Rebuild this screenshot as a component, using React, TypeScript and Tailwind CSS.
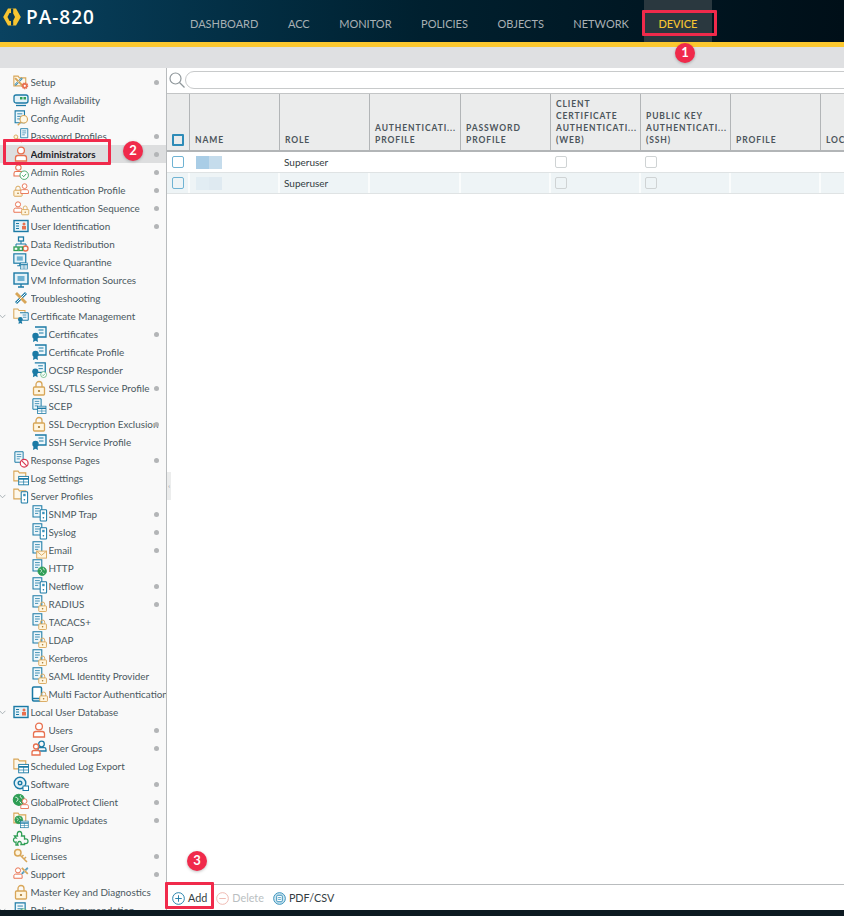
const BLUE = "#1b7aa5";
const ORANGE = "#e8704f";
const GOLD = "#d8a658";
const GREEN = "#2f9e55";

type Part = "person" | "lock" | "doc" | "folder" | "card" | "cert" | "check" | "no" | "device" | "mail" | "globe" | "wrench" | "key" | "disc" | "screen" | "puzzle" | "phone" | "tree" | "table" | "group" | "gear" | "glass" | "ha";

// small pieces the tree icons are put together from
function Piece({ part, x = 0, y = 0, s = 1, c }: { part: Part; x?: number; y?: number; s?: number; c?: string }) {
  const t = `translate(${x} ${y}) scale(${s})`;
  const p = { transform: t, fill: "none", strokeWidth: 1.3 };
  switch (part) {
    case "person":
      return (
        <g {...p} stroke={c ?? ORANGE}>
          <circle cx="8" cy="4.5" r="3.4" fill="#fff" />
          <path d="M2.5 15v-3.2c0-1.3 1-2.3 2.3-2.3h6.4c1.3 0 2.3 1 2.3 2.3V15z" fill="#fff" />
        </g>
      );
    case "lock":
      return (
        <g {...p} stroke={c ?? GOLD}>
          <path d="M5 7V4.5a3 3 0 0 1 6 0V7" />
          <rect x="2.5" y="7" width="11" height="8" rx="1" fill="#fff5df" />
          <circle cx="8" cy="11" r="1.1" fill={c ?? "#a8782e"} stroke="none" />
        </g>
      );
    case "doc":
      return (
        <g {...p} stroke={c ?? BLUE}>
          <path d="M2.5 1h11v14h-11z" fill="#eef7fb" />
          <path d="M5 4.5h6M5 7.5h6M5 10.5h4" strokeWidth="1" />
        </g>
      );
    case "folder":
      return (
        <g {...p} stroke={c ?? GOLD}>
          <path d="M1 14V2.5h5l1.5 2H15V14z" fill="#fdf8ec" />
        </g>
      );
    case "card":
      return (
        <g {...p} stroke={BLUE}>
          <rect x="1" y="2.5" width="14" height="11" fill="#e4f2f8" strokeWidth="1.4" />
          <path d="M3 5.5h3M3 8h3M3 10.5h3" strokeWidth="1" />
          <circle cx="11" cy="6" r="1.5" fill={ORANGE} stroke="none" />
          <rect x="9" y="8" width="4" height="3.5" fill={ORANGE} stroke="none" />
        </g>
      );
    case "cert":
      return (
        <g {...p}>
          <path d="M4 1h11v10H7" stroke={BLUE} fill="#eef7fb" />
          <path d="M7.5 4h5M8 7h4.5" stroke={BLUE} strokeWidth="1" />
          <circle cx="4.5" cy="10" r="3.2" fill={BLUE} stroke="none" />
          <path d="M2.5 12.5 2 16l2.5-1.2L7 16l-.5-3.5z" fill={BLUE} stroke="none" />
        </g>
      );
    case "check":
      return (
        <g {...p} stroke={c ?? GREEN}>
          <circle cx="8" cy="8" r="6.5" fill="#fff" />
          <path d="m5 8 2.2 2.3L11 6" strokeWidth="1.4" />
        </g>
      );
    case "no":
      return (
        <g {...p} stroke="#d9364f" strokeWidth="1.8">
          <circle cx="8" cy="8" r="6" fill="#fff" />
          <path d="m4 4 8 8" />
        </g>
      );
    case "device":
      return (
        <g {...p} stroke={BLUE}>
          <rect x="4" y="1" width="8" height="14" rx="1" fill="#fff" />
          <rect x="6.5" y="3.5" width="3" height="3" fill="#3a93bd" stroke="none" />
          <circle cx="8" cy="11" r="1" fill={BLUE} stroke="none" />
        </g>
      );
    case "mail":
      return (
        <g {...p} stroke={GOLD}>
          <rect x="1" y="3" width="14" height="10" fill="#fff5df" />
          <path d="m1 3 7 6 7-6" />
        </g>
      );
    case "globe":
      return (
        <g {...p} stroke={GREEN}>
          <circle cx="8" cy="8" r="6.5" fill="#2f9e55" />
          <path d="M4 5c2 0 3 1 3 2.5S5 10 5 10M10 3c-1 2 1 3 2 3M9 10l2 2.5" stroke="#fff" strokeWidth="1.1" />
        </g>
      );
    case "wrench":
      return (
        <g {...p}>
          <path d="m3 13 10-10" stroke={BLUE} strokeWidth="2.8" />
          <path d="m3 3 10 10" stroke={c ?? GOLD} strokeWidth="2.8" />
          <path d="m3.5 12.5 9-9" stroke="#fff" strokeWidth="1" />
        </g>
      );
    case "key":
      return (
        <g {...p} stroke={GOLD} strokeWidth="1.5">
          <circle cx="4.8" cy="4.8" r="3.2" fill="#fff5df" />
          <path d="m7 7 7 7m-3-3 2-2m-4-.5 1.5-1.5" />
        </g>
      );
    case "disc":
      return (
        <g {...p} stroke={BLUE} strokeWidth="1.4">
          <circle cx="7" cy="7" r="5.8" fill="#e4f2f8" />
          <circle cx="7" cy="7" r="1.8" />
          <rect x="10" y="10" width="5.5" height="4.5" fill="#fff" strokeWidth="1" />
        </g>
      );
    case "screen":
      return (
        <g {...p} stroke={BLUE}>
          <rect x="1" y="1" width="14" height="11" fill="#e4f2f8" strokeWidth="1.4" />
          <rect x="4.5" y="4" width="7" height="5" fill="#6fb2d2" stroke="none" />
          <path d="M8 12v3M5 15h6" />
        </g>
      );
    case "puzzle":
      return (
        <g {...p} stroke={GREEN}>
          <path d="M1.5 6h3c-.8-3 .3-4.5 2-4.5s2.8 1.5 2 4.500h3v3c3-.8 3.500 1 3.500 2.200s-.5 3-3.500 2.300v1H8c.8-2-.3-3-1.500-3S4 13 5 15H3v-3c-1.500.5-2.500-.5-2.500-2s1-2.500 2.500-2z" />
        </g>
      );
    case "phone":
      return (
        <g {...p} stroke={BLUE} strokeWidth="1.5">
          <rect x="1.5" y="1" width="9" height="14" rx="1.2" fill="#fff" />
          <path d="M1.5 12.500h9" />
        </g>
      );
    case "tree":
      return (
        <g {...p}>
          <rect x="5.500" y="1" width="5" height="4" stroke={BLUE} />
          <path d="M8 5v3M3 11V8h10v3" stroke={BLUE} strokeWidth="1" />
          <rect x="1" y="11" width="4" height="3.500" stroke={GREEN} />
          <circle cx="12.500" cy="12.500" r="2.500" stroke={ORANGE} strokeWidth="1.4" />
          <rect x="6" y="11" width="3.500" height="3.500" stroke={GREEN} />
        </g>
      );
    case "table":
      return (
        <g {...p} stroke={BLUE}>
          <rect x="1" y="2" width="14" height="12" fill="#fff" strokeWidth="1.300" />
          <path d="M1 5.500h14" strokeWidth="2.500" />
          <path d="M1 10h14M8 5.500V14" strokeWidth="1" />
        </g>
      );
    case "group":
      return (
        <g {...p}>
          <circle cx="10.500" cy="4" r="2.800" stroke={BLUE} />
          <path d="M7 11V9.500c0-1 .8-1.800 1.800-1.800h4.400c1 0 1.800.8 1.800 1.800V11z" stroke={BLUE} />
          <circle cx="5" cy="6.500" r="2.500" stroke={ORANGE} fill="#fff" />
          <path d="M1 15v-2.500c0-1 .8-2 2-2h4c1.200 0 2 1 2 2V15z" stroke={ORANGE} fill="#fff" />
        </g>
      );
    case "gear":
      return (
        <g {...p} stroke={ORANGE}>
          <circle cx="8" cy="8" r="4.500" fill={ORANGE} strokeDasharray="2 1" strokeWidth="2.500" />
          <circle cx="8" cy="8" r="1.800" fill="#fff" stroke="none" />
        </g>
      );
    case "glass":
      return (
        <g {...p} stroke={GOLD} strokeWidth="1.500">
          <circle cx="9" cy="7" r="5" fill="#fff8e6" />
          <path d="m5 11-4 4" strokeWidth="2" />
        </g>
      );
    default:
      return (
        <g {...p} stroke={BLUE} strokeWidth="1.300">
          <rect x="1" y="3" width="14" height="8" rx="2" fill="#e4f2f8" />
          <rect x="7" y="5" width="2.500" height="2.500" fill={GREEN} stroke="none" />
          <rect x="10.500" y="5" width="2.500" height="2.500" fill={GREEN} stroke="none" />
          <path d="M3 13.500h10" />
        </g>
      );
  }
}

type Layer = [Part, number, number, number, string?];

const icons: Record<string, Layer[]> = {
  setup: [["folder", 0, 0, 0.85], ["wrench", 0, 2, 0.7], ["gear", 7, 7, 0.6]],
  ha: [["ha", 0, 0, 1]],
  audit: [["doc", 0, 0, 0.85], ["glass", 4, 4, 0.75]],
  password: [["doc", 6, 0, 0.65], ["key", 0, 6, 0.6]],
  admin: [["person", 0, 0, 1]],
  roles: [["person", -1, 0, 0.8], ["check", 6, 6, 0.65]],
  authprofile: [["lock", -1, 3, 0.75], ["person", 6, 1, 0.7]],
  authseq: [["person", -1, 1, 0.75], ["lock", 7, 5, 0.65]],
  card: [["card", 0, 0, 1]],
  tree: [["tree", 0, 0, 1]],
  quarantine: [["screen", 0, -1, 0.85], ["table", 7, 8, 0.5]],
  vm: [["screen", 0, 0, 1]],
  trouble: [["wrench", 0, 0, 1]],
  certmgmt: [["folder", 0, -1, 0.8], ["cert", 4, 4, 0.75]],
  cert: [["cert", 0, 0, 1]],
  ocsp: [["cert", 0, 0, 0.95], ["check", 9, 9, 0.45, GREEN]],
  lock: [["lock", 0, 0, 1]],
  scep: [["doc", 0, 0, 0.75], ["table", 6, 7, 0.6]],
  response: [["doc", 0, -1, 0.75], ["no", 6, 6, 0.65]],
  logs: [["folder", 0, -1, 0.85], ["table", 5, 5, 0.7]],
  servers: [["folder", 0, -1, 0.85], ["device", 5, 3, 0.8]],
  snmp: [["doc", 0, -1, 0.8], ["device", 6, 3, 0.8]],
  email: [["doc", 0, -1, 0.8], ["mail", 5, 7, 0.7]],
  http: [["doc", 0, -1, 0.8], ["globe", 6, 6, 0.65]],
  serverlock: [["doc", 0, -1, 0.8], ["lock", 6, 5, 0.7]],
  mfa: [["phone", 0, 0, 1], ["lock", 7, 5, 0.7]],
  users: [["person", 0, 0, 1]],
  groups: [["group", 0, 0, 1]],
  software: [["disc", 0, 0, 1]],
  gp: [["globe", -1, -1, 0.85, GREEN], ["person", 6, 4, 0.7]],
  dynamic: [["folder", 0, -1, 0.85], ["globe", 1, 3, 0.6], ["table", 7, 8, 0.55]],
  plugin: [["puzzle", 0, 0, 1]],
  key: [["key", 0, 0, 1]],
  support: [["person", -1, 1, 0.75], ["wrench", 7, 0, 0.6]],
  policy: [["doc", 0, 0, 0.9], ["check", 6, 6, 0.55]],
};

function Icon({ name }: { name: string }) {
  return (
    <svg viewBox="0 0 16 16" className="w-4 h-4 shrink-0 overflow-visible">
      {icons[name].map(([part, x, y, s, c], i) => (
        <Piece key={i} part={part} x={x} y={y} s={s} c={c} />
      ))}
    </svg>
  );
}

type TreeItem = { label: string; icon: string; dot?: boolean; child?: boolean; open?: boolean; active?: boolean };

const tree: TreeItem[] = [
  { label: "Setup", icon: "setup", dot: true },
  { label: "High Availability", icon: "ha" },
  { label: "Config Audit", icon: "audit" },
  { label: "Password Profiles", icon: "password", dot: true },
  { label: "Administrators", icon: "admin", dot: true, active: true },
  { label: "Admin Roles", icon: "roles", dot: true },
  { label: "Authentication Profile", icon: "authprofile", dot: true },
  { label: "Authentication Sequence", icon: "authseq", dot: true },
  { label: "User Identification", icon: "card", dot: true },
  { label: "Data Redistribution", icon: "tree" },
  { label: "Device Quarantine", icon: "quarantine" },
  { label: "VM Information Sources", icon: "vm" },
  { label: "Troubleshooting", icon: "trouble" },
  { label: "Certificate Management", icon: "certmgmt", open: true },
  { label: "Certificates", icon: "cert", child: true, dot: true },
  { label: "Certificate Profile", icon: "cert", child: true },
  { label: "OCSP Responder", icon: "ocsp", child: true },
  { label: "SSL/TLS Service Profile", icon: "lock", child: true, dot: true },
  { label: "SCEP", icon: "scep", child: true },
  { label: "SSL Decryption Exclusion", icon: "lock", child: true, dot: true },
  { label: "SSH Service Profile", icon: "cert", child: true },
  { label: "Response Pages", icon: "response", dot: true },
  { label: "Log Settings", icon: "logs" },
  { label: "Server Profiles", icon: "servers", open: true },
  { label: "SNMP Trap", icon: "snmp", child: true, dot: true },
  { label: "Syslog", icon: "snmp", child: true, dot: true },
  { label: "Email", icon: "email", child: true, dot: true },
  { label: "HTTP", icon: "http", child: true },
  { label: "Netflow", icon: "snmp", child: true, dot: true },
  { label: "RADIUS", icon: "serverlock", child: true, dot: true },
  { label: "TACACS+", icon: "serverlock", child: true },
  { label: "LDAP", icon: "serverlock", child: true },
  { label: "Kerberos", icon: "serverlock", child: true },
  { label: "SAML Identity Provider", icon: "serverlock", child: true },
  { label: "Multi Factor Authentication", icon: "mfa", child: true },
  { label: "Local User Database", icon: "card", open: true },
  { label: "Users", icon: "users", child: true, dot: true },
  { label: "User Groups", icon: "groups", child: true, dot: true },
  { label: "Scheduled Log Export", icon: "logs" },
  { label: "Software", icon: "software", dot: true },
  { label: "GlobalProtect Client", icon: "gp", dot: true },
  { label: "Dynamic Updates", icon: "dynamic", dot: true },
  { label: "Plugins", icon: "plugin" },
  { label: "Licenses", icon: "key", dot: true },
  { label: "Support", icon: "support", dot: true },
  { label: "Master Key and Diagnostics", icon: "lock" },
  { label: "Policy Recommendation", icon: "policy", open: true },
];

const tabs = ["Dashboard", "ACC", "Monitor", "Policies", "Objects", "Network", "Device"];

const columns = [
  { w: "w-[90px]", lines: ["NAME"] },
  { w: "w-[90px]", lines: ["ROLE"] },
  { w: "w-[91px]", lines: ["AUTHENTICATI...", "PROFILE"] },
  { w: "w-[90px]", lines: ["PASSWORD", "PROFILE"] },
  { w: "w-[90px]", lines: ["CLIENT", "CERTIFICATE", "AUTHENTICATI...", "(WEB)"] },
  { w: "w-[90px]", lines: ["PUBLIC KEY", "AUTHENTICATI...", "(SSH)"] },
  { w: "w-[90px]", lines: ["PROFILE"] },
  { w: "w-[90px]", lines: ["LOCKED USER"] },
];

function TreeRow({ item }: { item: TreeItem }) {
  return (
    <div className={`relative flex items-center h-[18px] shrink-0 ${item.active ? "bg-[#dddedf]" : ""}`}>
      <span className={`flex items-center shrink-0 ${item.child ? "w-[31px] justify-end" : "w-[13px] justify-start"}`}>
        {item.open && (
          <svg viewBox="0 0 8 6" className="w-[7px] h-[5px] -ml-px mr-auto" fill="none" stroke="#9aa3a8">
            <path d="m.5 1 3.500 3.500L7.500 1" />
          </svg>
        )}
      </span>
      <Icon name={item.icon} />
      <span className={`ml-[1.500px] overflow-hidden whitespace-nowrap text-[9.900px] ${item.dot ? "w-[110px]" : "flex-1"} ${item.active ? "font-bold text-[#1d2327]" : "text-[#4a5860]"}`}>
        {item.label}
      </span>
      {item.dot && <span className="absolute left-[154px] top-[6.500px] w-[5px] h-[5px] rounded-full bg-[#b3b5b7]" />}
    </div>
  );
}

function Cell({ w, children }: { w: string; children?: React.ReactNode }) {
  return <div className={`${w} shrink-0 flex items-center pl-[4px] border-r-2 border-white/70 text-[10px] text-[#333c42]`}>{children}</div>;
}

function Check({ tone }: { tone: "blue" | "gray" }) {
  return (
    <span
      className={`block w-3 h-3 rounded-[2px] ${tone === "blue" ? "border-[1.500px] border-[#6fb3d3]" : "border border-[#cfd3d4]"}`}
    />
  );
}

function Row({ striped, blur }: { striped?: boolean; blur: [string, string] }) {
  return (
    <div className={`flex h-[21px] border-b border-[#dfe3e4] ${striped ? "bg-[#eef4f6]" : "bg-white"}`}>
      <div className="w-[23px] shrink-0 flex items-center pl-[5px] border-r-2 border-white/70">
        <Check tone="blue" />
      </div>
      <Cell w="w-[90px]">
        <span className="flex h-[13px] ml-[2px]">
          <span className={`w-[13px] ${blur[0]}`} />
          <span className={`w-[13px] ${blur[1]}`} />
        </span>
      </Cell>
      <Cell w="w-[90px]">Superuser</Cell>
      <Cell w="w-[91px]" />
      <Cell w="w-[90px]" />
      <Cell w="w-[90px]">
        <Check tone="gray" />
      </Cell>
      <Cell w="w-[90px]">
        <Check tone="gray" />
      </Cell>
      <Cell w="w-[90px]" />
      <Cell w="w-[90px]" />
    </div>
  );
}

function Badge({ n, className }: { n: number; className: string }) {
  return (
    <span className={`absolute w-5 h-5 rounded-full bg-[#f02a4b] text-white text-[13px] font-bold flex items-center justify-center shadow-[0_1px_3px_rgba(0,0,0,0.25)] ${className}`}>
      {n}
    </span>
  );
}

export default function App() {
  return (
    <div className="relative w-[844px] h-[916px] overflow-hidden bg-white flex flex-col font-['Lato','Liberation_Sans',sans-serif]">
      {/* Top nav */}
      <header className="h-[42px] shrink-0 flex bg-gradient-to-r from-[#0a4260] via-[#00202f] to-[#000f18]">
        <div className="w-[175.250px] shrink-0 flex items-start pt-[8px] pl-[3px] gap-[5px]">
          <svg viewBox="0 0 18 18" className="w-[18px] h-[18px]">
            <path d="M5 .5h8L17.800 9 13 17.500H5L.2 9z" fill="#f7c531" />
            <path d="M6.500 5h3.500L12 9l-2 4H6.500L4.500 9z" fill="#0a3a55" />
            <path d="M8 .5h2.200V5H8zM8 13h2.200v4.500H8z" fill="#0a3a55" />
          </svg>
          <span className="text-white text-[19px] font-semibold tracking-[1px] leading-[18px] font-['Open_Sans','Liberation_Sans',sans-serif]">PA-820</span>
        </div>
        <nav className="flex">
          {tabs.map((t) => (
            <div
              key={t}
              className={`px-[14.750px] flex items-center pt-[6px] text-[11px] uppercase ${t === "Device" ? "bg-[#2a383f] text-[#f7c531] font-medium" : "text-[#a8b0b4]"}`}
            >
              {t}
            </div>
          ))}
        </nav>
      </header>
      <div className="h-[5px] shrink-0 bg-[#fcc82f]" />
      <div className="h-[21px] shrink-0 bg-[#dfe0e2]" />

      <div className="flex-1 min-h-0 flex">
        {/* Device tree */}
        <aside className="w-[167px] shrink-0 bg-[#f9f9f9] border-r border-[#b9bcbe] pt-[5px] flex flex-col overflow-hidden">
          {tree.map((item) => (
            <TreeRow key={item.label} item={item} />
          ))}
        </aside>

        {/* Main table */}
        <main className="relative flex-1 min-w-0 flex flex-col overflow-hidden">
          <div className="h-[25px] shrink-0 flex items-center pl-[2px] pb-[1px]">
            <svg viewBox="0 0 16 16" className="w-4 h-4 shrink-0" fill="none" stroke="#8f979b" strokeWidth="1.200">
              <circle cx="6.500" cy="6.500" r="5.500" />
              <path d="m10.500 10.500 5 5" />
            </svg>
            <div className="h-[18px] w-[700px] shrink-0 rounded-l-[9px] border border-[#c8cacb] bg-white" />
          </div>

          <div className="flex h-[59px] shrink-0 bg-[#ebecec] border-b-2 border-[#b2b5b7] border-t border-t-[#c3c5c6]">
            <div className="w-[23px] shrink-0 flex items-end pb-[4px] pl-[5px] border-r border-[#b2b5b7]">
              <span className="block w-3 h-3 rounded-[1px] border-2 border-[#2e8cb8]" />
            </div>
            {columns.map((c, i) => (
              <div key={i} className={`${c.w} shrink-0 flex flex-col justify-end pl-[5px] pb-[4px] border-r border-[#b2b5b7] overflow-hidden`}>
                {c.lines.map((l) => (
                  <span key={l} className="block whitespace-nowrap text-[8.500px] leading-[12px] font-bold tracking-[0.9px] text-[#4b555b]">{l}</span>
                ))}
              </div>
            ))}
          </div>

          <Row blur={["bg-[#a9cde6]", "bg-[#c5dcec]"]} />
          <Row striped blur={["bg-[#e2edf3]", "bg-[#dfeaf1]"]} />

          <div className="flex-1" />

          <div className="h-[26px] shrink-0 border-t border-[#b9bcbe] flex items-center pl-[5px] pt-[1px] text-[10.800px] text-[#333c42] bg-white">
            <span className="flex items-center gap-[3px]">
              <svg viewBox="0 0 14 14" className="w-[13px] h-[13px]" fill="none" stroke="#1b7aa5">
                <circle cx="7" cy="7" r="6.300" />
                <path d="M7 3.500v7M3.500 7h7" />
              </svg>
              <span className="pt-[1px]">Add</span>
            </span>
            <span className="flex items-center gap-[3px] ml-[9px] text-[#b9bec1]">
              <svg viewBox="0 0 14 14" className="w-[13px] h-[13px]" fill="none" stroke="#eeb6ad">
                <circle cx="7" cy="7" r="6.300" />
                <path d="M3.500 7h7" />
              </svg>
              <span className="pt-[1px]">Delete</span>
            </span>
            <span className="flex items-center gap-[3px] ml-[9px]">
              <svg viewBox="0 0 14 14" className="w-[13px] h-[13px]" fill="#cfe7f2" stroke="#2d8bb7">
                <circle cx="7" cy="7" r="6.300" />
                <rect x="4" y="3.500" width="6" height="7" rx="1" fill="#fff" />
                <path d="M5.500 6h3M5.500 8h3" strokeWidth="0.800" />
              </svg>
              <span className="pt-[1px]">PDF/CSV</span>
            </span>
          </div>

          {/* Collapse handle for the tree */}
          <div className="absolute left-0 top-[404px] w-[4px] h-[28px] bg-[#eceded] flex items-center justify-center">
            <span className="text-[6px] leading-none text-[#7d8589]">‹</span>
          </div>
        </main>
      </div>

      <footer className="h-[6px] shrink-0 bg-[#0d1a21]" />

      {/* Callouts */}
      <div className="absolute left-[642px] top-[10px] w-[75px] h-[26px] border-[3px] border-[#f02a4b] rounded-[1px]" />
      <div className="absolute left-[3px] top-[139px] w-[108px] h-[26px] border-[3px] border-[#f02a4b] rounded-[1px]" />
      <div className="absolute left-[165px] top-[882px] w-[49px] h-[27px] border-[3px] border-[#f02a4b] rounded-[1px]" />
      <Badge n={1} className="left-[675px] top-[43px]" />
      <Badge n={2} className="left-[123px] top-[141px]" />
      <Badge n={3} className="left-[187px] top-[851px]" />
    </div>
  );
}
